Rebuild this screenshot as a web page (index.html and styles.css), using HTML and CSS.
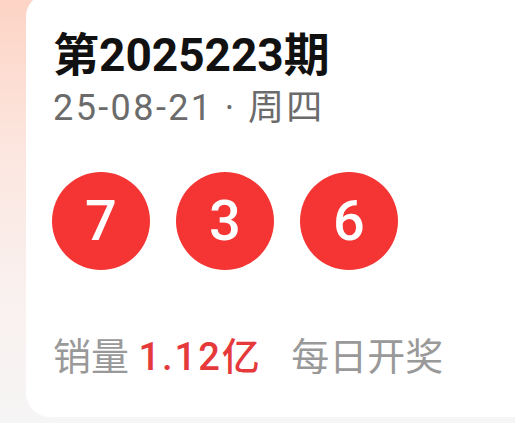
FILE: index.html
```html
<!DOCTYPE html>
<html lang="zh-CN">

<head>
    <meta charset="utf-8">
    <title>开奖详情</title>
    <link rel="stylesheet" href="styles.css">
</head>

<body>
    <div class="page">
        <div class="card">
            <h1 class="issue">第2025223期</h1>
            <div class="date">25-08-21 · 周四</div>
            <div class="balls">
                <span class="ball">7</span>
                <span class="ball">3</span>
                <span class="ball">6</span>
            </div>
            <div class="meta">
                <span>销量</span>
                <span class="sales">1.12亿</span>
                <span class="freq">每日开奖</span>
            </div>
        </div>
    </div>
</body>

</html>
```

FILE: styles.css
```css
html,
body {
    margin: 0;
    padding: 0;
}

body {
    font-family: Roboto, "Noto Sans CJK SC", sans-serif;
    background-color: #f5f5f5;
}

.page {
    width: 515px;
    height: 423px;
    overflow: hidden;
    background: linear-gradient(180deg, #fdd4c5 0, #fce6df 150px, #f9f1ef 300px, #f6f5f5 423px);
}

.card {
    margin-top: -7px;
    margin-left: 26px;
    width: 540px;
    height: 424px;
    box-sizing: border-box;
    padding: 35px 0 0 27px;
    background-color: #fff;
    border-radius: 24px;
}

.issue {
    margin: 0;
    font-size: 46px;
    line-height: 54px;
    font-weight: 700;
    color: #111;
}

.date {
    margin-top: 4px;
    font-size: 36px;
    line-height: 44px;
    letter-spacing: 2.4px;
    color: #6b6b6b;
}

.balls {
    display: flex;
    gap: 26px;
    margin-top: 42px;
    margin-left: -1px;
}

.ball {
    display: flex;
    align-items: center;
    justify-content: center;
    width: 98px;
    height: 98px;
    border-radius: 50%;
    background-color: #f53434;
    color: #fff;
    font-size: 56px;
    line-height: 1;
    font-weight: 500;
}

.meta {
    margin-top: 64px;
    font-size: 38px;
    line-height: 46px;
    color: #999;
}

.sales {
    color: #e5393b;
    font-weight: 500;
    letter-spacing: 2px;
}

.freq {
    margin-left: 20px;
}
```
